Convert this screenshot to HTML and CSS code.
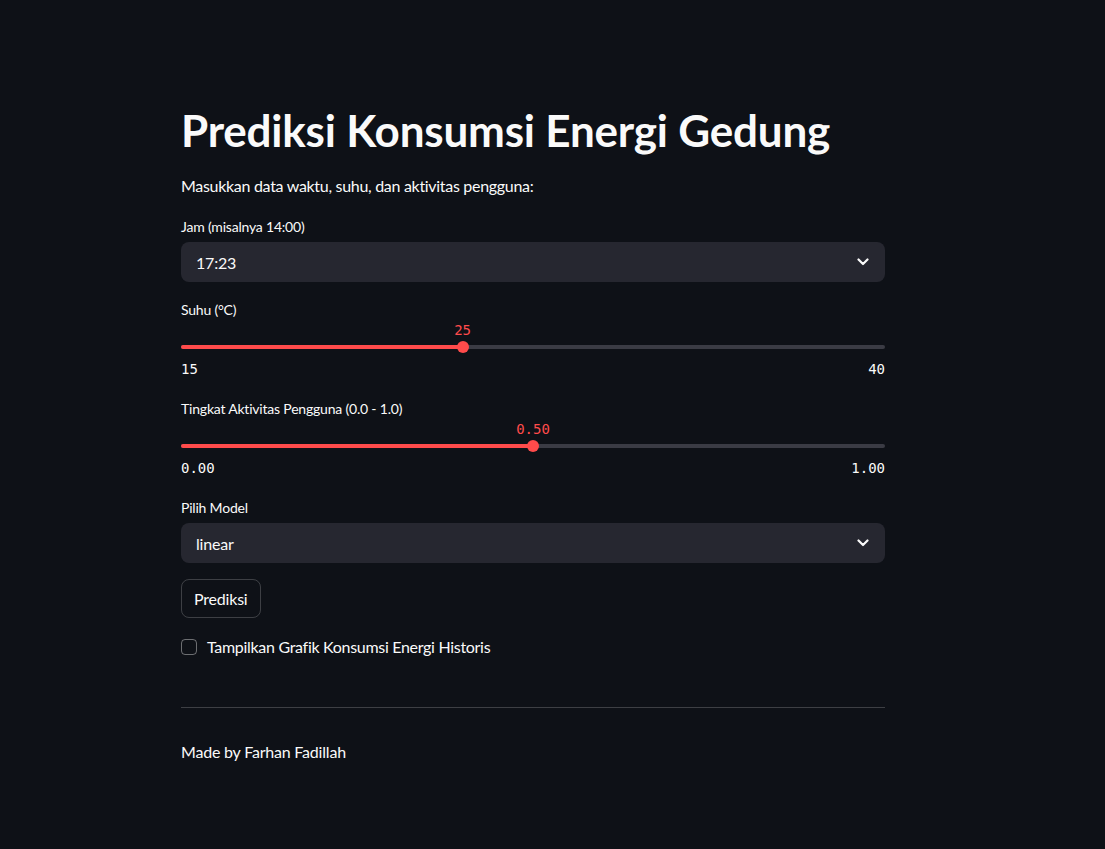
FILE: index.html
```html
<!DOCTYPE html>
<html lang="id">
<head>
<meta charset="utf-8">
<title>Prediksi Konsumsi Energi Gedung</title>
<link rel="stylesheet" href="styles.css">
</head>
<body>
<main class="app">
  <div class="block">
    <h1 class="title">Prediksi Konsumsi Energi Gedung</h1>
    <p class="intro">Masukkan data waktu, suhu, dan aktivitas pengguna:</p>

    <div class="field">
      <label class="label">Jam (misalnya 14:00)</label>
      <div class="select">
        <span class="select-value">17:23</span>
        <svg class="chev" width="12" height="8" viewBox="0 0 12 8"><path d="M1.5 1.5 L6 6 L10.5 1.5" fill="none" stroke="#fafafa" stroke-width="2.2" stroke-linecap="round" stroke-linejoin="round"/></svg>
      </div>
    </div>

    <div class="field field-slider">
      <label class="label">Suhu (°C)</label>
      <div class="slider">
        <div class="slider-top">
          <span class="thumb-value" style="left: 40%">25</span>
        </div>
        <div class="track">
          <div class="fill" style="width: 40%"></div>
          <div class="thumb" style="left: 40%"></div>
        </div>
        <div class="ticks"><span>15</span><span>40</span></div>
      </div>
    </div>

    <div class="field field-slider">
      <label class="label">Tingkat Aktivitas Pengguna (0.0 - 1.0)</label>
      <div class="slider">
        <div class="slider-top">
          <span class="thumb-value" style="left: 50%">0.50</span>
        </div>
        <div class="track">
          <div class="fill" style="width: 50%"></div>
          <div class="thumb" style="left: 50%"></div>
        </div>
        <div class="ticks"><span>0.00</span><span>1.00</span></div>
      </div>
    </div>

    <div class="field">
      <label class="label">Pilih Model</label>
      <div class="select">
        <span class="select-value">linear</span>
        <svg class="chev" width="12" height="8" viewBox="0 0 12 8"><path d="M1.5 1.5 L6 6 L10.5 1.5" fill="none" stroke="#fafafa" stroke-width="2.2" stroke-linecap="round" stroke-linejoin="round"/></svg>
      </div>
    </div>

    <div class="actions">
      <button class="btn" type="button">Prediksi</button>
    </div>

    <label class="check">
      <span class="box"></span>
      <span class="check-text">Tampilkan Grafik Konsumsi Energi Historis</span>
    </label>

    <hr class="divider">

    <p class="footer">Made by Farhan Fadillah</p>
  </div>
</main>
</body>
</html>
```

FILE: styles.css
```css
* { box-sizing: border-box; }

html, body {
  margin: 0;
  padding: 0;
  background: #0e1117;
  color: #fafafa;
  font-family: "Source Sans Pro", Lato, "Noto Sans", sans-serif;
  font-size: 16px;
}

.app {
  min-height: 849px;
  padding: 104px 0 60px 181px;
}

.block {
  width: 704px;
  display: flex;
  flex-direction: column;
}

.title {
  margin: 0;
  font-size: 44px;
  font-weight: 700;
  line-height: 53px;
  letter-spacing: -0.2px;
}

.intro {
  margin: 16px 0 0 0;
  font-size: 16px;
  line-height: 26px;
  letter-spacing: -0.3px;
}

.field {
  margin-top: 17px;
  display: flex;
  flex-direction: column;
}

.label {
  font-size: 14px;
  line-height: 22px;
  margin-bottom: 4px;
  letter-spacing: -0.2px;
}

.field-slider .label {
  margin-bottom: -1px;
}

.select {
  height: 40px;
  background: #262730;
  border-radius: 8px;
  display: flex;
  align-items: center;
  justify-content: space-between;
  padding: 0 16px 0 15px;
}

.select-value {
  font-size: 16px;
  letter-spacing: -0.2px;
}

.slider {
  display: flex;
  flex-direction: column;
}

.slider-top {
  position: relative;
  height: 25px;
}

.thumb-value {
  position: absolute;
  top: 0;
  transform: translateX(-50%);
  color: #ff4b4b;
  font-family: "DejaVu Sans Mono", "Liberation Mono", monospace;
  font-size: 14px;
  line-height: 20px;
}

.track {
  position: relative;
  height: 4px;
  background: #3a3b44;
  border-radius: 2px;
}

.fill {
  height: 4px;
  background: #ff4b4b;
  border-radius: 2px;
}

.thumb {
  position: absolute;
  top: -4px;
  width: 12px;
  height: 12px;
  margin-left: -6px;
  background: #ff4b4b;
  border-radius: 50%;
}

.ticks {
  display: flex;
  justify-content: space-between;
  margin-top: 10px;
  margin-bottom: 2px;
  font-family: "DejaVu Sans Mono", "Liberation Mono", monospace;
  font-size: 14px;
  line-height: 20px;
}

.actions {
  margin-top: 16px;
}

.btn {
  height: 39px;
  padding: 0 12px;
  background: transparent;
  color: #fafafa;
  border: 1px solid rgba(250, 250, 250, 0.2);
  border-radius: 8px;
  font-family: inherit;
  font-size: 16px;
  letter-spacing: -0.2px;
}

.check {
  margin-top: 18px;
  display: flex;
  align-items: center;
  gap: 10px;
}

.box {
  width: 16px;
  height: 16px;
  border: 1px solid rgba(250, 250, 250, 0.4);
  border-radius: 4px;
}

.check-text {
  font-size: 16px;
  line-height: 22px;
  letter-spacing: -0.3px;
}

.divider {
  margin: 49px 0 0 0;
  border: none;
  border-top: 1px solid rgba(250, 250, 250, 0.2);
}

.footer {
  margin: 31px 0 0 0;
  font-size: 16px;
  line-height: 26px;
  letter-spacing: -0.2px;
}
```
